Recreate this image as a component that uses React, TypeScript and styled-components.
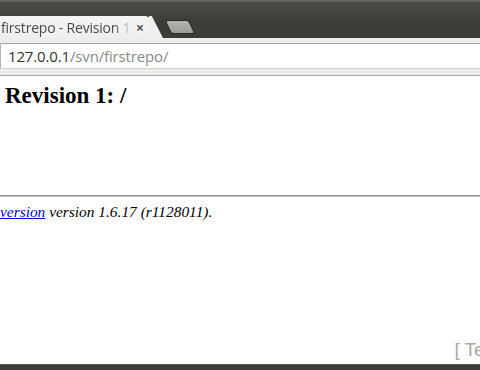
import styled, { createGlobalStyle } from "styled-components";

const Global = createGlobalStyle`
  html, body { margin: 0; padding: 0; background: #fff; }
  body { width: 480px; height: 370px; overflow: hidden; }
`;

const Window = styled.div`
  display: flex;
  flex-direction: column;
  width: 480px;
  height: 370px;
  overflow: hidden;
`;

const TitleBar = styled.div`
  height: 38px;
  display: flex;
  align-items: flex-end;
  background: linear-gradient(#5a5954 0, #5a5954 1px, #4c4b47 2px, #3d3c38 20px, #3c3b37 100%);
  border-top: 1px solid #6b6a65;
  box-sizing: border-box;
`;

const Tab = styled.div`
  position: relative;
  height: 22px;
  width: 150px;
  margin-left: -6px;
  padding: 0 0 0 7px;
  display: flex;
  align-items: center;
  background: linear-gradient(#f6f5f4, #efeeec);
  border-top-right-radius: 6px;
  font-family: "Open Sans", "DejaVu Sans", sans-serif;
  font-size: 14px;
  color: #4b4b4b;
  &::after {
    content: "";
    position: absolute;
    right: -12px;
    top: 0;
    width: 14px;
    height: 22px;
    background: #efeeec;
    clip-path: polygon(0 0, 20% 0, 100% 100%, 0 100%);
  }
`;

const TabTitle = styled.span`
  white-space: nowrap;
  overflow: hidden;
  width: 132px;
  letter-spacing: -0.2px;
  -webkit-mask-image: linear-gradient(90deg, #000 86%, transparent 100%);
  mask-image: linear-gradient(90deg, #000 86%, transparent 100%);
`;

const Close = styled.span`
  margin-left: 3px;
  font-size: 14px;
  font-weight: bold;
  color: #555;
`;

const NewTab = styled.div`
  width: 22px;
  height: 12px;
  margin: 0 0 5px 18px;
  background: linear-gradient(#b4b3b0, #9e9d9a);
  border-radius: 2px;
  transform: skewX(25deg);
  box-shadow: 0 0 0 1px #2a2a27;
`;

const Toolbar = styled.div`
  height: 38px;
  box-sizing: border-box;
  padding: 5px 0 6px;
  background: #eeedeb;
  border-bottom: 1px solid #a9a8a6;
`;

const Omnibox = styled.div`
  height: 100%;
  box-sizing: border-box;
  padding-left: 7px;
  display: flex;
  align-items: center;
  background: #fff;
  border-top: 1px solid #a4a4a2;
  border-bottom: 1px solid #d0d0ce;
  border-left: 1px solid #b5b5b3;
  font-family: "Open Sans", "DejaVu Sans", sans-serif;
  font-size: 15px;
  letter-spacing: -0.15px;
`;

const Host = styled.span`
  color: #333;
`;

const Path = styled.span`
  color: #8a8a8a;
`;

const Page = styled.div`
  flex: 1;
  display: flex;
  flex-direction: column;
  background: #fff;
  font-family: "Liberation Serif", "Times New Roman", serif;
  overflow: hidden;
`;

const Heading = styled.h2`
  margin: 6px 0 0 5px;
  font-size: 23px;
  line-height: 28px;
  font-weight: bold;
  color: #000;
`;

const Rule = styled.hr`
  margin: 85px 0 0;
  border: 0;
  border-top: 1px solid #999;
  border-bottom: 1px solid #bbb;
  height: 0;
`;

const Footer = styled.em`
  display: block;
  margin-top: 5px;
  font-size: 15.4px;
  line-height: 20px;
  white-space: nowrap;
  a { color: #0000ee; text-decoration: underline; }
`;

const BottomRow = styled.div`
  margin-top: auto;
  margin-bottom: 3px;
  display: flex;
  justify-content: flex-end;
  font-family: "Liberation Sans", Arial, sans-serif;
  font-size: 19px;
  color: #aaa;
  white-space: nowrap;
`;

const TextLink = styled.span`
  margin-right: -30px;
`;

const StatusBar = styled.div`
  height: 5px;
  background: #3c3b37;
  border-top: 1px solid #5c5b56;
`;

export default function App() {
  return (
    <Window>
      <Global />
      <TitleBar>
        <Tab>
          <TabTitle>firstrepo - Revision 1: /</TabTitle>
          <Close>×</Close>
        </Tab>
        <NewTab />
      </TitleBar>
      <Toolbar>
        <Omnibox>
          <Host>127.0.0.1</Host>
          <Path>/svn/firstrepo/</Path>
        </Omnibox>
      </Toolbar>
      <Page>
        <Heading>Revision 1: /</Heading>
        <Rule />
        <Footer>
          <a href="#">version</a> version 1.6.17 (r1128011).
        </Footer>
        <BottomRow>
          <TextLink>[ Text ]</TextLink>
        </BottomRow>
      </Page>
      <StatusBar />
    </Window>
  );
}
